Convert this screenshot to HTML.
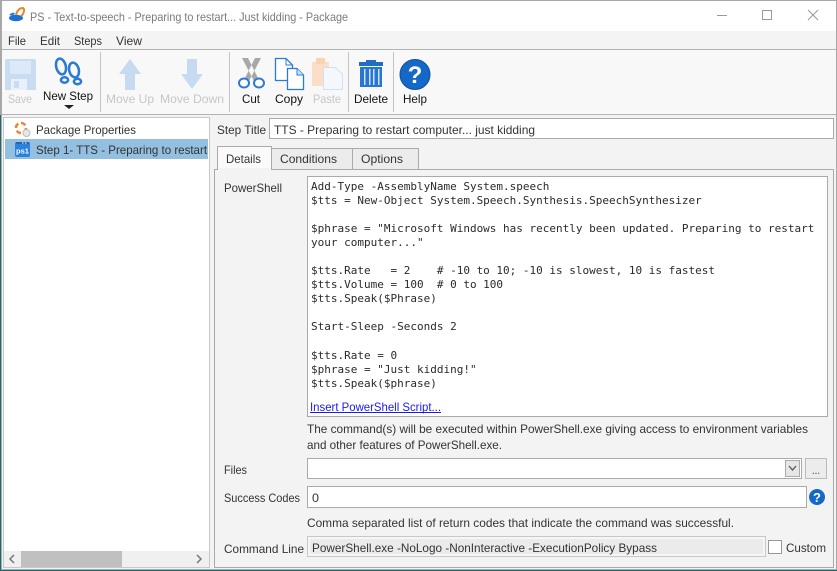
<!DOCTYPE html>
<html><head><meta charset="utf-8"><style>
html,body{margin:0;padding:0;background:#f3f3f3;overflow:hidden}
svg{display:block}
text{font-family:"Liberation Sans",sans-serif;font-size:12px;fill:#333;white-space:pre}
.m{font-family:"DejaVu Sans Mono","Liberation Mono",monospace;font-size:11px;fill:#2a2a2a}
.d{fill:#c6c6c6}
</style></head><body>
<svg width="837" height="571" viewBox="0 0 837 571" xmlns="http://www.w3.org/2000/svg">
<rect width="837" height="571" fill="#f3f3f3"/>
<!-- title bar -->
<rect y="0" width="837" height="31" fill="#fff"/>
<rect y="0" width="837" height="1" fill="#a8a8a8"/>
<rect y="31" width="837" height="18" fill="#f4f4f4"/>
<rect y="49" width="837" height="1" fill="#b4b4b4"/>
<rect y="50" width="837" height="64" fill="#f8f8f8"/>
<rect y="114" width="837" height="1" fill="#b4b4b4"/>
<rect x="1" y="0" width="1" height="570" fill="#a8a8a8"/>
<rect x="836" y="0" width="1" height="571" fill="#a8a8a8"/>
<!-- logo -->
<ellipse cx="16" cy="18" rx="7" ry="3.2" fill="#1c70d0"/>
<path d="M9 15C11 13 13 12 15 13L13 16Z" fill="#2a80dd"/>
<path d="M16 15C17 11 19 8 23 8C25 9 24 14 21 16" fill="none" stroke="#e8862a" stroke-width="2"/>
<text x="30" y="21" textLength="318" lengthAdjust="spacingAndGlyphs" style="fill:#7a7a7a">PS - Text-to-speech - Preparing to restart... Just kidding - Package</text>
<!-- window controls -->
<rect x="717" y="15" width="10" height="1" fill="#999"/>
<rect x="762.500" y="10.500" width="9" height="9" fill="none" stroke="#999"/>
<path d="M808 10L818 20M818 10L808 20" stroke="#999" fill="none"/>
<!-- menu -->
<text x="8" y="45" textLength="18" lengthAdjust="spacingAndGlyphs">File</text>
<text x="40" y="45" textLength="20" lengthAdjust="spacingAndGlyphs">Edit</text>
<text x="74" y="45" textLength="28" lengthAdjust="spacingAndGlyphs">Steps</text>
<text x="116" y="45" textLength="26" lengthAdjust="spacingAndGlyphs">View</text>
<!-- toolbar separators -->
<rect x="100" y="52" width="1" height="60" fill="#c4c4c4"/>
<rect x="229" y="52" width="1" height="60" fill="#c4c4c4"/>
<rect x="348" y="52" width="1" height="60" fill="#c4c4c4"/>
<rect x="393" y="52" width="1" height="60" fill="#c4c4c4"/>
<!-- save -->
<path d="M5 61Q5 59 7 59H34Q36 59 36 61V90H5Z" fill="#c9dcf1"/>
<rect x="10" y="61" width="21" height="13" fill="#dce9f6"/>
<rect x="11" y="79" width="16" height="11" fill="#e8f0f9"/>
<rect x="14" y="81" width="5" height="7" fill="#c9dcf1"/>
<!-- new step footprints -->
<g fill="none" stroke="#2b7bd4" stroke-width="2.500">
<ellipse cx="61" cy="66.500" rx="4.800" ry="8" transform="rotate(-14 61 66.500)"/>
<ellipse cx="64.500" cy="80" rx="3.600" ry="2.700"/>
<ellipse cx="74" cy="70" rx="4.800" ry="7.500" transform="rotate(-14 74 70)"/>
<ellipse cx="77.500" cy="81.500" rx="3.600" ry="2.700"/>
</g>
<path d="M64 105H74L69 109Z" fill="#222"/>
<!-- up/down -->
<path d="M130 59L141 74H135V90H125V74H119Z" fill="#c6daf1"/>
<path d="M187 59H197V74H203L192 89L181 74H187Z" fill="#c6daf1"/>
<!-- scissors -->
<path d="M242 58L248 58L258 78L254 81ZM261 58L255 58L245 78L249 81Z" fill="#a8a8a8"/>
<ellipse cx="244" cy="83" rx="5" ry="4.500" fill="#fff" stroke="#2b7bd4" stroke-width="2"/>
<ellipse cx="259" cy="83" rx="5" ry="4.500" fill="#fff" stroke="#2b7bd4" stroke-width="2"/>
<!-- copy -->
<path d="M275.500 58.500H286L292.500 65V80.500H275.500Z" fill="#fff" stroke="#2b7bd4" stroke-width="1.300"/>
<path d="M287.500 68.500H297L303.500 75V89.500H287.500Z" fill="#fff" stroke="#2b7bd4" stroke-width="1.300"/>
<path d="M286 58.500V65H292.500" fill="none" stroke="#2b7bd4"/>
<path d="M297 68.500V75H303.500" fill="#cfe0f4" stroke="#2b7bd4"/>
<!-- paste -->
<rect x="312" y="62" width="17" height="24" fill="#fadfc6"/>
<rect x="316" y="58" width="9" height="6" fill="#f8d3b0"/>
<path d="M323.500 67.500H335L342.500 74V89.500H323.500Z" fill="#f4f8fd" stroke="#cfe0f4"/>
<!-- delete -->
<rect x="359" y="62" width="24" height="4" fill="#1f6dc4"/>
<rect x="366" y="60" width="10" height="2" fill="#1f6dc4"/>
<rect x="360" y="67" width="22" height="20" fill="#2677d2"/>
<g fill="#cfe0f4"><rect x="364" y="69" width="1.500" height="16"/><rect x="369" y="69" width="1.500" height="16"/><rect x="373" y="69" width="1.500" height="16"/><rect x="378" y="69" width="1.500" height="16"/></g>
<!-- help -->
<circle cx="415" cy="74.500" r="15" fill="#1568c8" stroke="#0f4f9c"/>
<text x="415" y="83" text-anchor="middle" style="font-size:24px;font-weight:bold;fill:#fff">?</text>
<!-- toolbar labels -->
<text class="d" x="8" y="103" textLength="24" lengthAdjust="spacingAndGlyphs">Save</text>
<text x="43" y="100" textLength="50" lengthAdjust="spacingAndGlyphs" style="fill:#111">New Step</text>
<text class="d" x="106" y="103" textLength="48" lengthAdjust="spacingAndGlyphs">Move Up</text>
<text class="d" x="160" y="103" textLength="64" lengthAdjust="spacingAndGlyphs">Move Down</text>
<text x="242" y="103" textLength="18" lengthAdjust="spacingAndGlyphs" style="fill:#111">Cut</text>
<text x="275" y="103" textLength="28" lengthAdjust="spacingAndGlyphs" style="fill:#111">Copy</text>
<text class="d" x="313" y="103" textLength="28" lengthAdjust="spacingAndGlyphs">Paste</text>
<text x="354" y="103" textLength="34" lengthAdjust="spacingAndGlyphs" style="fill:#111">Delete</text>
<text x="403" y="103" textLength="24" lengthAdjust="spacingAndGlyphs" style="fill:#111">Help</text>
<!-- left panel -->
<rect x="3.500" y="117.500" width="206" height="450" fill="#fff" stroke="#c8c8c8"/>
<rect x="5" y="139" width="203" height="20" fill="#93bfe1"/>
<circle cx="21" cy="128" r="5" fill="none" stroke="#ea8a35" stroke-width="2.600" stroke-dasharray="5 2.800"/>
<circle cx="26.500" cy="133" r="3.500" fill="#e6e6e6" stroke="#bdbdbd"/>
<rect x="15" y="142" width="15" height="15" rx="2" fill="#2b82dc"/>
<rect x="16" y="142" width="13" height="2" fill="#1f66b8"/>
<rect x="22" y="142.500" width="1.500" height="1" fill="#fff"/><rect x="25" y="142.500" width="1.500" height="1" fill="#fff"/>
<text x="16" y="153.500" style="font-size:7.500px;font-weight:bold;fill:#fff" textLength="13" lengthAdjust="spacingAndGlyphs">ps1</text>
<text x="36" y="134" textLength="100" lengthAdjust="spacingAndGlyphs">Package Properties</text>
<svg x="30" y="139" width="178" height="20"><text x="6" y="15" textLength="180" lengthAdjust="spacingAndGlyphs">Step 1- TTS - Preparing to restart c</text></svg>
<!-- scrollbar -->
<rect x="4" y="551" width="205" height="16" fill="#f0f0f0"/>
<rect x="21" y="551" width="101" height="16" fill="#c0c0c0"/>
<path d="M14 555L10 559L14 563M197 555L201 559L197 563" fill="none" stroke="#777" stroke-width="1.500"/>
<!-- step title -->
<text x="217" y="134" textLength="49" lengthAdjust="spacingAndGlyphs">Step Title</text>
<rect x="269.500" y="118.500" width="564" height="20" fill="#fff" stroke="#aaa"/>
<text x="274" y="134" textLength="261" lengthAdjust="spacingAndGlyphs">TTS - Preparing to restart computer... just kidding</text>
<!-- tabs -->
<rect x="214.500" y="169.500" width="619" height="398" fill="#f3f3f3" stroke="#aaa"/>
<rect x="271.500" y="148.500" width="81" height="21" fill="#ececec" stroke="#aaa"/>
<rect x="352.500" y="148.500" width="66" height="21" fill="#ececec" stroke="#aaa"/>
<path d="M217.500 170V146.500H271.500V170" fill="#fafafa" stroke="#aaa"/>
<rect x="218" y="168" width="53" height="3" fill="#f3f3f3"/>
<text x="226" y="163" textLength="35" lengthAdjust="spacingAndGlyphs">Details</text>
<text x="280" y="163" textLength="57" lengthAdjust="spacingAndGlyphs">Conditions</text>
<text x="361" y="163" textLength="42" lengthAdjust="spacingAndGlyphs">Options</text>
<!-- powershell -->
<text x="224" y="192" textLength="58" lengthAdjust="spacingAndGlyphs">PowerShell</text>
<rect x="307.500" y="176.500" width="520" height="240" fill="#fff" stroke="#aaa"/>
<text class="m" x="311" y="190">Add-Type -AssemblyName System.speech</text>
<text class="m" x="311" y="204">$tts = New-Object System.Speech.Synthesis.SpeechSynthesizer</text>
<text class="m" x="311" y="232">$phrase = "Microsoft Windows has recently been updated. Preparing to restart</text>
<text class="m" x="311" y="246">your computer..."</text>
<text class="m" x="311" y="274">$tts.Rate   = 2    # -10 to 10; -10 is slowest, 10 is fastest</text>
<text class="m" x="311" y="288">$tts.Volume = 100  # 0 to 100</text>
<text class="m" x="311" y="302">$tts.Speak($Phrase)</text>
<text class="m" x="311" y="330">Start-Sleep -Seconds 2</text>
<text class="m" x="311" y="359">$tts.Rate = 0</text>
<text class="m" x="311" y="373">$phrase = "Just kidding!"</text>
<text class="m" x="311" y="387">$tts.Speak($phrase)</text>
<text x="310" y="411" textLength="131" lengthAdjust="spacingAndGlyphs" style="fill:#1a1aee">Insert PowerShell Script...</text>
<rect x="310" y="412" width="131" height="1" fill="#1a1aee"/>
<text x="307" y="433" textLength="501" lengthAdjust="spacingAndGlyphs">The command(s) will be executed within PowerShell.exe giving access to environment variables</text>
<text x="307" y="449" textLength="195" lengthAdjust="spacingAndGlyphs">and other features of PowerShell.exe.</text>
<!-- files -->
<text x="224" y="474" textLength="23" lengthAdjust="spacingAndGlyphs">Files</text>
<rect x="307.500" y="458.500" width="494" height="20" fill="#fff" stroke="#aaa"/>
<rect x="785.500" y="460.500" width="14" height="16" fill="#e6e6e6" stroke="#aaa"/>
<path d="M789 466L792.500 470L796 466" fill="none" stroke="#555" stroke-width="1.300"/>
<rect x="805.500" y="458.500" width="21" height="20" fill="#ececec" stroke="#bbb"/>
<text x="812" y="474" style="fill:#444" textLength="8" lengthAdjust="spacingAndGlyphs">...</text>
<!-- success -->
<text x="224" y="502" textLength="76" lengthAdjust="spacingAndGlyphs">Success Codes</text>
<rect x="307.500" y="486.500" width="499" height="21" fill="#fff" stroke="#aaa"/>
<text x="312" y="502" textLength="7" lengthAdjust="spacingAndGlyphs">0</text>
<circle cx="817" cy="497" r="8" fill="#1568c8"/>
<text x="817" y="502" text-anchor="middle" style="font-size:13px;font-weight:bold;fill:#fff">?</text>
<text x="307" y="527" textLength="427" lengthAdjust="spacingAndGlyphs">Comma separated list of return codes that indicate the command was successful.</text>
<!-- command line -->
<text x="224" y="553" textLength="80" lengthAdjust="spacingAndGlyphs">Command Line</text>
<rect x="307.500" y="536.500" width="458" height="20" fill="#f6f6f6" stroke="#c8c8c8"/>
<rect x="310" y="539" width="453" height="15" fill="#ebebeb"/>
<text x="312" y="552" textLength="345" lengthAdjust="spacingAndGlyphs">PowerShell.exe -NoLogo -NonInteractive -ExecutionPolicy Bypass</text>
<rect x="768.500" y="540.500" width="13" height="13" fill="#fff" stroke="#999"/>
<text x="786" y="552" textLength="40" lengthAdjust="spacingAndGlyphs">Custom</text>
<!-- bottom edge -->
<rect y="569" width="837" height="1" fill="#a8a8a8"/>
<rect y="570" width="837" height="1" fill="#1f6a70"/>
<rect x="0" y="115" width="1" height="456" fill="#1f6a70"/>
<rect x="0" y="0" width="1" height="115" fill="#a8a8a8"/>
</svg>
</body></html>
